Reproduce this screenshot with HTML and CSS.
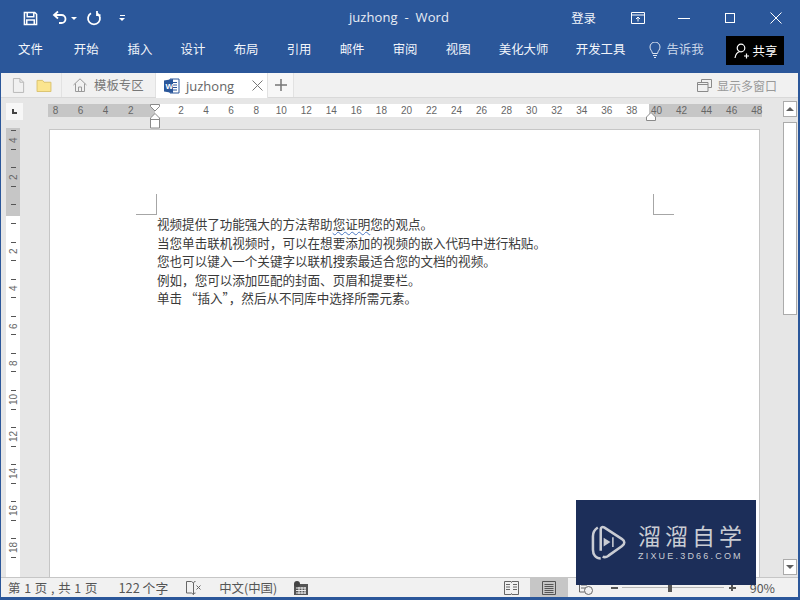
FILE: index.html
```html
<!DOCTYPE html>
<html lang="zh">
<head>
<meta charset="utf-8">
<title>juzhong - Word</title>
<link rel="stylesheet" href="styles.css">
</head>
<body>
<div class="app">
  <header class="titlebar">
    <div class="qat">
      <svg class="ic save" viewBox="0 0 16 16"><path d="M1.500 1.500h11l2 2v11h-13z M4.500 1.500v4.500h7v-4.500 M4 14.500v-5h8v5" fill="none" stroke="#fff" stroke-width="1.600"/></svg>
      <svg class="ic undo" viewBox="0 0 16 16"><path d="M6 1.500 2 5l4 3.500M2.500 5h7a4 4 0 0 1 0 8H7" fill="none" stroke="#fff" stroke-width="1.800"/></svg>
      <span class="caret"></span>
      <svg class="ic redo" viewBox="0 0 16 16"><path d="M11 3.200a6 6 0 1 1-6 0M11 1v4.200h3.500" fill="none" stroke="#fff" stroke-width="1.800"/></svg>
      <span class="custom"><i></i><span class="caret"></span></span>
    </div>
    <div class="doc-title">juzhong&nbsp; - &nbsp;Word</div>
    <div class="win">
      <span class="login">登录</span>
      <svg class="ic display" viewBox="0 0 14 12"><path d="M.5.500h13v11H.500zM.5 3h13M7 9.500V5M5 7l2-2 2 2" fill="none" stroke="#fff"/></svg>
      <span class="min"></span>
      <span class="max"></span>
      <svg class="ic close" viewBox="0 0 12 12"><path d="M.5.500l11 11M11.500.500l-11 11" stroke="#fff" fill="none"/></svg>
    </div>
  </header>
  <nav class="ribbon">
    <span class="rtab t1">文件</span><span class="rtab t2">开始</span><span class="rtab t3">插入</span><span class="rtab t4">设计</span><span class="rtab t4">布局</span><span class="rtab t4">引用</span><span class="rtab t4">邮件</span><span class="rtab t4">审阅</span><span class="rtab t4">视图</span><span class="rtab t4">美化大师</span><span class="rtab t5">开发工具</span>
    <svg class="ic bulb" viewBox="0 0 12 16"><path d="M3.500 11.500C3 8.500 1 8 1 5a5 5 0 0 1 10 0c0 3-2 3.500-2.500 6.500zM4 13.500h4M5 15.500h2" fill="none" stroke="#dfe6f1"/></svg>
    <span class="tell">告诉我</span>
    <span class="share">
      <svg class="ic user" viewBox="0 0 16 16"><circle cx="7" cy="5" r="3.800" fill="none" stroke="#fff" stroke-width="1.200"/><path d="M1 15c.5-3.500 2.500-6 5-6.500M10 13h5M12.500 10.500v5" fill="none" stroke="#fff" stroke-width="1.200"/></svg>
      共享
    </span>
  </nav>
  <div class="tabstrip">
    <div class="quick">
      <svg class="ic newdoc" viewBox="0 0 14 16"><path d="M1.500.500h7l4 4v11h-11zM8.500.500v4h4" fill="none" stroke="#b5b5b5"/></svg>
      <svg class="ic folder" viewBox="0 0 16 14"><path d="M.5 1.500h6l1.500 2h7.500v10H.500z" fill="#fbe58f" stroke="#d9c06b"/></svg>
    </div>
    <div class="tab tmpl">
      <svg class="ic home" viewBox="0 0 14 14"><path d="M.5 7 7 .8 13.500 7M2.500 5.500v8h9v-8M5.500 13.500V9h3v4.500" fill="none" stroke="#9a9a9a"/></svg>
      模板专区
    </div>
    <div class="tab active">
      <svg class="ic wordlogo" viewBox="0 0 16 16"><path d="M6 1h9v14H6z" fill="#fff" stroke="#2b579a"/><path d="M8 4.500h5M8 7h5M8 9.500h5M8 12h5" stroke="#2b579a"/><path d="M0 2.500 9 1v14L0 13.500z" fill="#2b579a"/><text x="1.500" y="11" class="wordw">W</text></svg>
      <span class="tabname">juzhong</span>
      <svg class="ic tabx" viewBox="0 0 11 11"><path d="M.5.500l10 10M10.500.500l-10 10" stroke="#777" fill="none"/></svg>
    </div>
    <div class="tab plus">
      <svg class="ic plusic" viewBox="0 0 12 12"><path d="M6 0v12M0 6h12" stroke="#777" stroke-width="1.500" fill="none"/></svg>
    </div>
    <div class="multi">
      <svg class="ic multiic" viewBox="0 0 15 13"><path d="M4.500 3V.500h10v8H11M.5 3.500h10.500v9H.500zM.5 5.500H11" fill="none" stroke="#8a8a8a"/></svg>
      显示多窗口
    </div>
  </div>
  <div class="rulerrow">
    <div class="corner"><span class="cornermark"></span></div>
    <div class="hruler">
      <div class="hseg grey left"><span>8</span><span>6</span><span>4</span><span>2</span></div>
      <div class="hseg white"><span>2</span><span>4</span><span>6</span><span>8</span><span>10</span><span>12</span><span>14</span><span>16</span><span>18</span><span>20</span><span>22</span><span>24</span><span>26</span><span>28</span><span>30</span><span>32</span><span>34</span><span>36</span><span>38</span></div>
      <div class="hseg grey right"><span>40</span><span>42</span><span>44</span><span>46</span><span>48</span></div>
      <svg class="indent ileft" viewBox="0 0 10 25"><path d="M.5.500h9v2L5 7 .5 2.500zM5 9.500 9.500 14v10h-9V14zM.5 15.500h9" fill="#fff" stroke="#8a8a8a"/></svg>
      <svg class="indent iright" viewBox="0 0 10 9"><path d="M5 .5 9.500 5v3.500h-9V5z" fill="#fff" stroke="#8a8a8a"/></svg>
    </div>
    <div class="scrollup"><span class="arrow-up"></span></div>
  </div>
  <div class="workspace">
    <div class="vruler">
      <div class="vc"><i></i><span class="vn">4</span><i></i></div>
      <div class="vc"><i></i><span class="vn">2</span><i></i></div>
      <div class="vc"><i></i><span class="vn"></span><i></i></div>
      <div class="vc"><i></i><span class="vn">2</span><i></i></div>
      <div class="vc"><i></i><span class="vn">4</span><i></i></div>
      <div class="vc"><i></i><span class="vn">6</span><i></i></div>
      <div class="vc"><i></i><span class="vn">8</span><i></i></div>
      <div class="vc"><i></i><span class="vn">10</span><i></i></div>
      <div class="vc"><i></i><span class="vn">12</span><i></i></div>
      <div class="vc"><i></i><span class="vn">14</span><i></i></div>
      <div class="vc"><i></i><span class="vn">16</span><i></i></div>
      <div class="vc"><i></i><span class="vn">18</span><i></i></div>
    </div>
    <main class="page">
      <span class="crop crop-l"></span>
      <span class="crop crop-r"></span>
      <p>视频提供了功能强大的方法帮助<span class="squiggle">您证明</span>您的观点。</p>
      <p>当您单击联机视频时，可以在想要添加的视频的嵌入代码中进行粘贴。</p>
      <p>您也可以键入一个关键字以联机搜索最适合您的文档的视频。</p>
      <p>例如，您可以添加匹配的封面、页眉和提要栏。</p>
      <p>单击 “插入”，然后从不同库中选择所需元素。</p>
    </main>
    <div class="scrollbar">
      <div class="thumb"></div>
      <div class="scrolldown"><span class="arrow-down"></span></div>
    </div>
  </div>
  <footer class="status">
    <span class="st s1">第 1 页 , 共 1 页</span>
    <span class="st s2">122 个字</span>
    <svg class="ic book" viewBox="0 0 15 14"><path d="M.5.500h5l2 1.500V13.500l-2-1.500h-5zM7.500 2l1-1.500h1M7.500 13.500l1-1.500h1" fill="none" stroke="#666"/><path d="M10.500 4.500l4 4M14.500 4.500l-4 4" stroke="#666" fill="none"/></svg>
    <span class="st s3">中文(中国)</span>
    <svg class="ic macro" viewBox="0 0 14 14"><path d="M0 3h14v11H0z" fill="#555"/><circle cx="3" cy="3" r="3" fill="#444"/><path d="M2 7h10M2 9.500h10M2 12h10M5 6v7M8 6v7M11 6v7" stroke="#eee"/></svg>
    <svg class="ic view v1" viewBox="0 0 15 14"><path d="M.5.500h6.500l.5 1 .5-1h6.500v13H8l-.5-1-.5 1H.500zM2 3.500h4M2 6h4M2 8.500h4M9 3.500h4M9 6h4M9 8.500h4" fill="none" stroke="#666"/></svg>
    <div class="viewactive"><svg class="ic v2" viewBox="0 0 14 14"><path d="M.5.500h13v13H.500zM2.500 3.500h9M2.500 5.500h9M2.500 7.500h9M2.500 9.500h9M2.500 11.500h9" fill="none" stroke="#555"/></svg></div>
    <svg class="ic v3" viewBox="0 0 14 14"><path d="M.5 1h7M.5 1v10h5M2 4h6M2 7h4" fill="none" stroke="#666"/><circle cx="9.500" cy="9.500" r="4" fill="none" stroke="#666"/></svg>
    <span class="zbtn minus"></span>
    <div class="slider"><span class="sthumb"></span></div>
    <span class="zbtn plusz"></span>
    <span class="st pct">90%</span>
  </footer>
  <aside class="watermark">
    <svg class="wm-logo" viewBox="0 0 36 38"><path d="M7 3C4 5 2 8 2 12v14c0 5 3 9 8 9" fill="none" stroke="#c9ccd3" stroke-width="2.600"/><path d="M10 27V5c0-2 1.500-3 3.500-2L32 15c3 2 3 5 0 7L18 32c-2 1.500-4 2-6 1" fill="none" stroke="#c9ccd3" stroke-width="2.600"/><path d="M13 13.500l7 4.500-7 4.500z" fill="#c9ccd3"/><path d="M22.500 13v10" stroke="#c9ccd3" stroke-width="1.600"/></svg>
    <div class="wm-text">
      <div class="wm-cn">溜溜自学</div>
      <div class="wm-en">ZIXUE.3D66.COM</div>
    </div>
  </aside>
</div>
</body>
</html>
```
FILE: styles.css
```css
* { box-sizing: border-box; }
html, body { margin: 0; padding: 0; }
body {
  width: 800px;
  height: 600px;
  overflow: hidden;
  font-family: "Noto Sans CJK SC", "Noto Sans", sans-serif;
  font-size: 12.4px;
  color: #444;
}
.app {
  position: relative;
  width: 800px;
  height: 600px;
  display: flex;
  flex-direction: column;
  background: #e6e6e6;
  border-left: 1px solid #2b579a;
  border-right: 2px solid #2b579a;
  border-bottom: 3px solid #2b579a;
  overflow: hidden;
}
.ic { display: block; flex: none; }

/* title bar */
.titlebar {
  position: relative;
  height: 36px;
  flex: none;
  background: #2b579a;
  color: #fff;
  display: flex;
  align-items: center;
  justify-content: space-between;
}
.qat { display: flex; align-items: center; padding-left: 22px; }
.save { width: 15px; height: 15px; }
.undo { width: 16px; height: 16px; margin-left: 14px; }
.caret {
  width: 0; height: 0;
  border-left: 3px solid transparent;
  border-right: 3px solid transparent;
  border-top: 3px solid #fff;
  display: block;
}
.qat > .caret { margin-left: 3px; }
.redo { width: 16px; height: 16px; margin-left: 9px; }
.custom { margin-left: 17px; display: flex; flex-direction: column; gap: 2px; align-items: center; }
.custom i { width: 5px; height: 1px; background: #fff; display: block; }
.doc-title {
  position: absolute;
  left: 348px;
  top: 7px;
  font-family: "Open Sans", "Noto Sans", sans-serif;
  font-size: 13px;
  line-height: 20px;
  letter-spacing: .06px;
  color: #e8edf5;
}
.win { display: flex; align-items: center; padding-right: 16px; }
.login { font-size: 12.4px; color: #f2f5fa; }
.display { width: 14px; height: 12px; margin-left: 35px; }
.min { display: block; width: 12px; height: 1px; background: #fff; margin-left: 33px; }
.max { display: block; width: 10px; height: 10px; border: 1px solid #fff; margin-left: 35px; }
.close { width: 12px; height: 12px; margin-left: 35px; }

/* ribbon tabs */
.ribbon {
  height: 37px;
  flex: none;
  background: #2b579a;
  color: #f2f5fa;
  display: flex;
  align-items: flex-start;
  padding-left: 17px;
}
.rtab { line-height: 26px; white-space: nowrap; }
.t2 { margin-left: 31px; }
.t3 { margin-left: 29px; }
.t4 { margin-left: 28.250px; }
.t5 { margin-left: 27.500px; }
.bulb { width: 12px; height: 16px; margin: 6px 0 0 24px; }
.tell { margin-left: 5px; line-height: 26px; color: #c9d5e8; }
.share {
  margin-left: 22px;
  width: 58px;
  height: 29px;
  background: #000;
  color: #fff;
  display: flex;
  align-items: center;
  gap: 3px;
  padding-left: 8px;
  white-space: nowrap;
}
.user { width: 16px; height: 16px; }

/* tab strip */
.tabstrip {
  height: 25px;
  flex: none;
  background: #f1f1f1;
  display: flex;
  align-items: stretch;
  border-bottom: 1px solid #d9d9d9;
  color: #777;
}
.quick {
  width: 61px;
  display: flex;
  align-items: center;
  gap: 11px;
  padding-left: 11px;
  border-right: 1px solid #e2e2e2;
}
.newdoc { width: 13px; height: 15px; }
.folder { width: 16px; height: 13px; }
.tab { display: flex; align-items: center; border-right: 1px solid #e2e2e2; }
.tmpl { width: 94px; padding-left: 11px; gap: 7px; }
.home { width: 14px; height: 14px; }
.active { width: 112px; background: #fff; padding-left: 8px; margin-bottom: -1px; }
.wordlogo { width: 16px; height: 16px; }
.wordw { font-family: "Liberation Sans", sans-serif; font-size: 8px; font-weight: 700; fill: #fff; }
.tabname { margin-left: 6px; font-family: "Open Sans", sans-serif; font-size: 13px; color: #666; }
.tabx { width: 11px; height: 11px; margin-left: 18px; }
.plus { width: 26px; justify-content: center; background: #f7f7f7; }
.plusic { width: 12px; height: 12px; }
.multi {
  margin-left: auto;
  padding-right: 21px;
  display: flex;
  align-items: center;
  gap: 5px;
  font-size: 12px;
  color: #999;
}
.multiic { width: 15px; height: 13px; }

/* ruler row */
.rulerrow { height: 31px; flex: none; display: flex; align-items: flex-start; }
.corner {
  width: 17px;
  height: 17px;
  margin: 5px 0 0 5px;
  background: #f7f7f7;
  display: flex;
  align-items: center;
  justify-content: center;
}
.cornermark {
  display: block;
  width: 5px;
  height: 5px;
  border-left: 2px solid #444;
  border-bottom: 2px solid #444;
}
.hruler {
  position: relative;
  margin: 6px 0 0 25px;
  height: 13px;
  width: 714px;
  display: flex;
  font-family: "Liberation Sans", sans-serif;
  font-size: 10px;
  line-height: 13px;
  color: #666;
}
.hseg { display: flex; height: 13px; flex: none; }
.hseg span { display: block; width: 25.050px; text-align: center; flex: none; }
.grey { background: #c6c6c6; }
.white { background: #fff; }
.left { width: 107px; }
.left span:first-child { margin-left: -5px; }
.white { width: 494px; padding-left: 13.500px; }
.right { width: 113px; }
.right span:first-child { margin-left: -5px; }
.indent { position: absolute; width: 10px; }
.ileft { left: 102px; top: 0; height: 25px; }
.iright { left: 598px; top: 8px; height: 9px; }
.scrollup {
  margin: 3px 0 0 21px;
  width: 14px;
  height: 16px;
  background: #fff;
  border: 1px solid #ababab;
  display: flex;
  align-items: center;
  justify-content: center;
}
.arrow-up, .arrow-down {
  display: block;
  width: 0; height: 0;
  border-left: 4px solid transparent;
  border-right: 4px solid transparent;
}
.arrow-up { border-bottom: 4px solid #606060; }
.arrow-down { border-top: 4px solid #606060; }

/* workspace */
.workspace { flex: 1; min-height: 0; display: flex; align-items: stretch; }
.vruler {
  width: 14px;
  margin: -1px 0 0 5px;
  display: flex;
  flex-direction: column;
  font-family: "Liberation Sans", sans-serif;
  font-size: 10px;
  color: #666;
  overflow: hidden;
  background: linear-gradient(#c6c6c6 88px, #fff 88px);
}
.vc {
  height: 37.100px;
  flex: none;
  display: flex;
  flex-direction: column;
  align-items: center;
  justify-content: center;
  gap: 3.800px;
}
.vc:first-child { margin-top: -6.500px; }
.vc i { display: block; width: 5px; height: 1px; background: #555; flex: none; }
.vn {
  display: block;
  height: 10px;
  width: 13px;
  line-height: 13px;
  writing-mode: vertical-rl;
  transform: rotate(180deg);
  text-align: center;
  white-space: nowrap;
  flex: none;
}
.page {
  position: relative;
  width: 711px;
  margin: 0 0 0 29px;
  background: #fff;
  border: 1px solid #c6c6c6;
  border-bottom: 0;
  padding: 85px 0 0 107px;
  color: #3a3a3a;
  font-size: 12.550px;
  line-height: 18.600px;
}
.page p { margin: 0; white-space: nowrap; }
.crop { position: absolute; top: 64px; width: 21px; height: 21px; border-bottom: 1px solid #a6a6a6; }
.crop-l { left: 86px; border-right: 1px solid #a6a6a6; }
.crop-r { left: 603px; border-left: 1px solid #a6a6a6; }
.squiggle { text-decoration: underline wavy #4a78c4 1px; text-underline-offset: 2px; }
.scrollbar {
  margin-left: 23px;
  width: 14px;
  display: flex;
  flex-direction: column;
  justify-content: flex-start;
}
.thumb { height: 193px; background: #fff; border: 1px solid #ababab; margin-top: -7px; }
.scrolldown {
  margin-top: auto;
  margin-bottom: 2px;
  height: 16px;
  background: #fff;
  border: 1px solid #ababab;
  display: flex;
  align-items: center;
  justify-content: center;
}

/* status */
.status {
  height: 20px;
  flex: none;
  background: #f1f1f1;
  border-top: 1px solid #c6c6c6;
  display: flex;
  align-items: center;
  color: #555;
  white-space: nowrap;
}
.s1 { margin-left: 7px; word-spacing: 1px; }
.s2 { margin-left: 21px; font-size: 12.800px; }
.book { width: 15px; height: 14px; margin-left: 18px; }
.s3 { margin-left: 18px; }
.macro { width: 14px; height: 14px; margin-left: 17px; }
.v1 { width: 15px; height: 14px; margin-left: auto; }
.viewactive {
  width: 38px;
  height: 19px;
  margin-left: 11px;
  background: #c6c6c6;
  display: flex;
  align-items: center;
  justify-content: center;
}
.v2 { width: 14px; height: 14px; }
.v3 { width: 14px; height: 14px; margin-left: 11px; }
.zbtn { display: block; position: relative; width: 7px; height: 2px; background: #555; }
.minus { margin-left: 18px; }
.plusz { margin-left: 5px; }
.plusz::after { content: ""; position: absolute; left: 2.500px; top: -2.500px; width: 2px; height: 7px; background: #555; }
.slider { position: relative; width: 102px; height: 1px; margin-left: 4px; background: #b5b5b5; }
.sthumb { position: absolute; left: 46px; top: -4px; width: 4px; height: 9px; background: #555; }
.pct { margin-left: 14px; margin-right: 23px; }

/* watermark */
.watermark {
  position: absolute;
  left: 575px;
  top: 500px;
  width: 180px;
  height: 85px;
  background: #1c2e59;
  display: flex;
  align-items: center;
  padding-left: 15px;
  color: #c9ccd3;
}
.wm-logo { width: 35px; height: 38px; flex: none; }
.wm-text { margin-left: 12px; display: flex; flex-direction: column; gap: 3.500px; }
.wm-cn { font-size: 23px; line-height: 24px; letter-spacing: 4px; white-space: nowrap; }
.wm-en { font-family: "Liberation Sans", sans-serif; font-size: 9px; line-height: 12px; letter-spacing: 2.200px; white-space: nowrap; }
```
